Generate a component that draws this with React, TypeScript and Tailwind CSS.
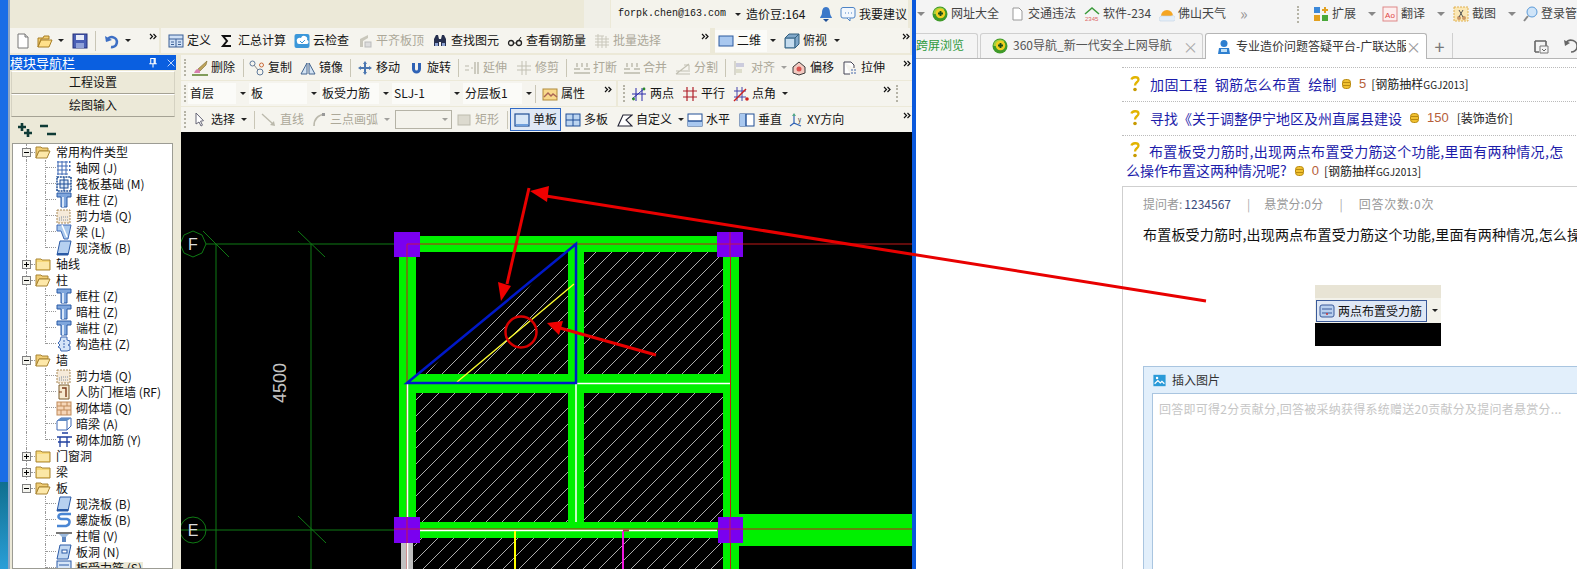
import React from "react";

type N = React.ReactNode;

const Ic = ({ children, cls = "w-4 h-4" }: { children: N; cls?: string }) => (
  <svg viewBox="0 0 16 16" className={`${cls} shrink-0`}>{children}</svg>
);

const Arrow = ({ cls = "" }: { cls?: string }) => (
  <span className={`block w-0 h-0 shrink-0 border-x-[3px] border-x-transparent border-t-[3px] border-t-[#222] ${cls}`} />
);
const GArrow = ({ cls = "" }: { cls?: string }) => (
  <span className={`block w-0 h-0 shrink-0 border-x-[4px] border-x-transparent border-t-[4px] border-t-[#888] ${cls}`} />
);

const Chev = ({ cls = "" }: { cls?: string }) => (
  <svg viewBox="0 0 8 7" className={`w-2 h-[7px] shrink-0 ${cls}`}>
    <path d="M1 1l2.5 2.5L1 6M4.5 1L7 3.5 4.5 6" fill="none" stroke="#111" strokeWidth="1.2" />
  </svg>
);

const Grip = ({ cls = "" }: { cls?: string }) => (
  <span className={`block w-[2px] h-[17px] shrink-0 border-l-2 border-dotted border-[#b5b3a6] ${cls}`} />
);

const Sep = ({ w }: { w: string }) => (
  <span className={`block h-[18px] shrink-0 border-l border-[#c9c6b6] ${w}`} />
);

function Tool({ w, icon, text, off, arrow, tone }: { w: string; icon?: N; text: string; off?: boolean; arrow?: boolean; tone?: string }) {
  return (
    <div className={`flex items-center gap-[3px] shrink-0 ${w}`}>
      {icon}
      <span className={`whitespace-nowrap mb-[2px] ${off ? "text-[#aca899]" : tone ?? "text-[#151515]"}`}>{text}</span>
      {arrow && <Arrow cls={off ? "ml-[3px] opacity-40" : "ml-[3px]"} />}
    </div>
  );
}

function Field({ w, text }: { w: string; text: string }) {
  return (
    <div className={`flex items-center h-[21px] shrink-0 ${w}`}>
      <div className="flex-1 h-full bg-[#fbfbf8] pl-[2px] pb-[2px] flex items-center whitespace-nowrap overflow-hidden text-[#151515]">{text}</div>
      <div className="w-[13px] flex justify-center"><Arrow /></div>
    </div>
  );
}

/* ---------- toolbar icons ---------- */
const I = {
  doc: <Ic><path d="M3 1h7l3 3v11H3z" fill="#fff" stroke="#777" /><path d="M10 1v3h3" fill="#ddd" stroke="#777" /></Ic>,
  folder: <Ic><path d="M1 5h5l1-2h5v3H4L1 14z" fill="#f3cf73" stroke="#a87f25" /><path d="M1 14l3-7h11l-3 7z" fill="#ffe08a" stroke="#a87f25" /></Ic>,
  save: <Ic><rect x="1" y="1" width="14" height="14" fill="#4a5fb5" stroke="#24307a" /><rect x="4" y="2" width="8" height="5" fill="#e8ecf8" /><rect x="4" y="10" width="8" height="5" fill="#8fa0d8" /></Ic>,
  undo: <Ic><path d="M3 8a5 5 0 1 1 4 6" fill="none" stroke="#3d6fc4" strokeWidth="2.6" /><path d="M1 3l1 6 6-2z" fill="#3d6fc4" /></Ic>,
  def: <Ic><rect x="1" y="2" width="14" height="12" fill="#cfe0f5" stroke="#3a5f95" /><path d="M1 6h14M8 6v8M3 9h3M10 9h3M3 11.5h3M10 11.5h3" stroke="#3a5f95" /></Ic>,
  sigma: <Ic><path d="M12 3H4l4 5-4 5h8" fill="none" stroke="#111" strokeWidth="2" /></Ic>,
  cloud: <Ic><rect x="0.5" y="1" width="15" height="14" rx="2" fill="#3b97d9" /><path d="M3 9a3 3 0 0 1 4-4 3 3 0 0 1 6 2 2 2 0 0 1-1 4H5a2 2 0 0 1-2-2z" fill="#fff" /><path d="M6 8l2 2 3-3" fill="none" stroke="#3b97d9" /></Ic>,
  alignTop: <Ic><path d="M3 14V6l8-4v3l-5 3v6z" fill="#c9c7bb" /><rect x="8" y="9" width="6" height="5" fill="#ddd" stroke="#bbb" /></Ic>,
  binoc: <Ic><path d="M2 13V6l2-4h2l1 4v7zM14 13V6l-2-4h-2L9 6v7z" fill="#27304f" /><rect x="7" y="6" width="2" height="3" fill="#27304f" /><rect x="3" y="10" width="3" height="3" fill="#8aa0d0" /><rect x="10" y="10" width="3" height="3" fill="#8aa0d0" /></Ic>,
  glasses: <Ic><circle cx="4" cy="10" r="2.5" fill="none" stroke="#222" strokeWidth="1.3" /><circle cx="12" cy="10" r="2.5" fill="none" stroke="#222" strokeWidth="1.3" /><path d="M6.5 10h3M12 7l2-3" stroke="#222" /></Ic>,
  batch: <Ic><path d="M1 3h9M1 6h14M1 9h14M1 12h14M4 1v14M8 3v12M12 3v12" stroke="#c9c7bb" /></Ic>,
  rect2d: <Ic><rect x="1" y="3" width="14" height="10" fill="#a9c8ef" stroke="#2d5a9e" /></Ic>,
  cube: <Ic><path d="M1 5l4-4h10v10l-4 4H1z" fill="#7fa7c9" stroke="#34607f" /><path d="M1 5h10v10M11 5l4-4" fill="none" stroke="#34607f" /><rect x="2" y="6" width="8" height="8" fill="#c5dcee" /></Ic>,
  brush: <Ic><path d="M15 1L6 9l2 2 6-6z" fill="#bda35a" stroke="#7c6a2c" strokeWidth=".6" /><path d="M6 9c-2 0-3 2-4 4h6l0-2z" fill="#d880b0" /><path d="M0 15h16" stroke="#5a7f2a" strokeWidth="1.5" /></Ic>,
  copy: <Ic><circle cx="3.5" cy="3.5" r="2.5" fill="none" stroke="#5f7a9c" /><circle cx="12.5" cy="5" r="2" fill="none" stroke="#c96a3a" /><circle cx="11" cy="12" r="3" fill="none" stroke="#5f7a9c" /><path d="M5 5l4 5" stroke="#888" /></Ic>,
  mirror: <Ic><path d="M7 3v11H1zM9 3v11h6z" fill="#d3e3f3" stroke="#44658f" /></Ic>,
  move: <Ic><path d="M8 1l2 3H9v3h3V6l3 2-3 2V9H9v3h1l-2 3-2-3h1V9H4v1L1 8l3-2v1h3V4H6z" fill="#4a76b0" /></Ic>,
  rotate: <Ic><path d="M4 3v6a4.5 4.5 0 0 0 9 0V3h-3v6a1.5 1.5 0 0 1-3 0V3z" fill="#2f62b5" /></Ic>,
  extend: <Ic><path d="M1 6h4M1 10h4M7 8h2" stroke="#bbb9ac" /><path d="M11 2v12M14 2v12" stroke="#bbb9ac" strokeWidth="1.4" /></Ic>,
  trim: <Ic><path d="M1 6h14M1 10h14M6 1v14M10 1v14" stroke="#c2c0b3" /></Ic>,
  brk: <Ic><path d="M0 9h6M10 9h6M0 13h16M3 3v4M8 3v4M13 3v4" stroke="#bbb9ac" strokeWidth="1.4" /></Ic>,
  split: <Ic><path d="M1 14h14M1 11h14M1 14l13-10" stroke="#c2c0b3" strokeWidth="1.2" /><path d="M9 5h5v5" fill="none" stroke="#c2c0b3" /></Ic>,
  align: <Ic><path d="M3 1v14" stroke="#bbb9ac" /><rect x="4" y="3" width="8" height="4" fill="#ccd" /><rect x="4" y="9" width="6" height="4" fill="#ddc" /></Ic>,
  offset: <Ic><path d="M8 2l6 5v6l-6 2-6-2V7z" fill="#f2c9c0" stroke="#3a3a3a" /><circle cx="8" cy="9" r="2.5" fill="#d9534f" /></Ic>,
  stretch: <Ic><path d="M2 2h7l3 3v3M2 2v12h6" fill="#fff" stroke="#445" /><path d="M9 10h5M9 13h5" stroke="#46a" strokeDasharray="2 1" /></Ic>,
  prop: <Ic><rect x="1" y="3" width="14" height="11" fill="#f8d98c" stroke="#b0893a" /><path d="M2 11l4-4 3 3 2-2 4 3" fill="none" stroke="#a65" strokeWidth="1.4" /></Ic>,
  two: <Ic><path d="M1 13L14 2M1 8h14M5 2v13M11 2v13" stroke="#2a2aaa" /><circle cx="2.5" cy="13" r="1.4" fill="#2a8a2a" /><circle cx="13" cy="3" r="1.4" fill="#2a8a2a" /></Ic>,
  para: <Ic><path d="M1 5h14M1 11h14M5 1v14M11 1v14" stroke="#b0202a" strokeWidth="1.2" /></Ic>,
  pang: <Ic><path d="M1 5h12M1 11h12M4 1v14M9 1v14" stroke="#44a" /><path d="M1 15L13 3" stroke="#c22" strokeWidth="1.4" /><circle cx="14" cy="13" r="1.8" fill="#c22" /></Ic>,
  cursor: <Ic><path d="M4 1v11l3-2 2 4 1.500-.8-2-4 3-.5z" fill="#fff" stroke="#667" /></Ic>,
  line: <Ic><path d="M1 2l11 10" stroke="#bbb9ac" strokeWidth="1.3" /><path d="M14 14l-5-1 4-4z" fill="#bbb9ac" /></Ic>,
  arc: <Ic><path d="M3 14C3 7 7 3 14 2" fill="none" stroke="#bbb9ac" strokeWidth="1.6" /><rect x="11" y="1" width="3" height="3" fill="#999" /></Ic>,
  rectOff: <Ic><rect x="2" y="3" width="12" height="10" fill="#dcdacf" stroke="#bdbbae" /></Ic>,
  single: <Ic><rect x="1" y="2" width="14" height="12" fill="#d7e6f7" stroke="#214f96" strokeWidth="1.2" /><path d="M2 13h12" stroke="#6f9fdc" strokeWidth="2" /></Ic>,
  multi: <Ic><rect x="1" y="2" width="14" height="12" fill="#bcd5f0" stroke="#214f96" /><path d="M8 2v12M1 8h14" stroke="#214f96" /></Ic>,
  custom: <Ic><path d="M1 14l5-11h9l-6 5 6 6z" fill="#fff" stroke="#223" strokeWidth="1.1" /></Ic>,
  horiz: <Ic><rect x="1" y="2" width="14" height="12" fill="#fff" stroke="#214f96" /><path d="M1 9h14v5H1z" fill="#a9c8ef" /><path d="M1 9h14" stroke="#214f96" strokeWidth="1.4" /></Ic>,
  vert: <Ic><rect x="1" y="2" width="14" height="12" fill="#fff" stroke="#214f96" /><path d="M1 2h6v12H1z" fill="#a9c8ef" /><path d="M7 2v12" stroke="#214f96" strokeWidth="1.4" /></Ic>,
  xy: <Ic><path d="M6 2v9l7 3M6 11l-4 3" fill="none" stroke="#2f62b5" strokeWidth="1.2" /><path d="M4 4l2-3 2 3" fill="#5a8" /><text x="10" y="10" fontSize="6" fill="#222">y</text></Ic>,
  bell: <Ic><path d="M8 1c3 0 4 3 4 6 0 2 2 4 2 5H2c0-1 2-3 2-5 0-3 1-6 4-6z" fill="#3b78c9" /><path d="M5 13h6l-3 3z" fill="#1f4f96" /></Ic>,
  chat: <Ic><rect x="1" y="1.500" width="14" height="10.500" rx="2" fill="#f2f7fd" stroke="#4d83c5" /><path d="M7 12l3 3v-3" fill="#f2f7fd" stroke="#4d83c5" /><path d="M5 7h1M8 7h1M11 7h1" stroke="#4d83c5" /></Ic>,
  pin: <Ic cls="w-3 h-3"><path d="M5 2h6v7H5zM3 9h10M8 9v5M9.500 2v7" fill="none" stroke="#fff" strokeWidth="1.400" /></Ic>,
  close: <Ic cls="w-3 h-3"><path d="M3.500 3.500l9 9M12.500 3.500l-9 9" stroke="#cfe0ff" strokeWidth="1.200" /></Ic>,
};

/* ---------- tree icons ---------- */
const Col = <Ic><path d="M1 1h14v4h-4v10H5V5H1z" fill="#7fa6dc" stroke="#2a5aa6" /><path d="M7 5v10" stroke="#d8e6f8" strokeWidth="2" /></Ic>;
const Wall = <Ic><rect x="1" y="2" width="13" height="13" fill="#f6ead9" stroke="#a98a58" strokeDasharray="2 1" /><path d="M3 12h9M5 9h7M3 10h4" stroke="#a9b0b8" strokeDasharray="1 1" strokeWidth="1.500" /></Ic>;
const Slab = <Ic><path d="M4 1h11l-3 14H1z" fill="#b6d0f0" stroke="#2a5aa6" /><path d="M1 14h11" stroke="#2a5aa6" strokeWidth="2" /></Ic>;
const T: Record<string, N> = {
  grid: <Ic><path d="M1 2h11M1 6h11M1 10h11M1 14h11M2 1v14M6 1v14M10 1v14" stroke="#3f69b4" /><path d="M13 2h2M13 6h2M13 10h2" stroke="#3f69b4" strokeWidth="2" strokeDasharray="1.500 1" /></Ic>,
  raft: <Ic><rect x="1" y="1" width="14" height="14" fill="none" stroke="#1f4f96" strokeWidth="1.500" strokeDasharray="2 .8" /><rect x="4" y="4" width="8" height="8" fill="#dce8f6" stroke="#1f4f96" /><path d="M1 8h14M8 1v14" stroke="#1f4f96" /></Ic>,
  col: Col,
  wall: Wall,
  beam: <Ic><path d="M1 1h14l-3 14H8L5 7H1z" fill="#a9c8ec" stroke="#3f69b4" /><path d="M6 1l5 12" stroke="#fff" strokeWidth="1.500" /></Ic>,
  slab: Slab,
  puzzle: <Ic><path d="M5 1h6v3l3 1v3l-2 1 2 1v4l-3 1H5l-1-3-2-1 2-2-2-2 2-2z" fill="#d6e5f7" stroke="#3f69b4" /><path d="M8 4v8" stroke="#3f69b4" strokeDasharray="2 1" /></Ic>,
  door: <Ic><path d="M3 1h10v14H3z" fill="#f7ead0" stroke="#7a5a2a" /><path d="M6 4h4v9" fill="none" stroke="#7a3a1a" strokeWidth="1.400" /><path d="M3 8h3" stroke="#7a3a1a" /></Ic>,
  brick: <Ic><rect x="1" y="2" width="14" height="13" fill="#f6d6b8" stroke="#c08a5a" /><path d="M1 6h14M1 10h14M5 2v4M11 2v4M8 6v4M5 10v5M11 10v5" stroke="#c08a5a" /></Ic>,
  dark: <Ic><path d="M1 5l4-3h10v8l-4 4H1z" fill="#fff" stroke="#3f69b4" /><path d="M5 2h10l-4 3H1z" fill="#5e8ac4" /><path d="M11 5v9" stroke="#3f69b4" /></Ic>,
  rebar: <Ic><path d="M1 5h15M4 5v10M11 5v10M2 10h12M6 1h6" stroke="#1f3f9e" strokeWidth="1.300" /></Ic>,
  spiral: <Ic><path d="M15 2H6C2 2 1 6 5 7h6c4 1 3 6-1 7H1" fill="none" stroke="#4a86d4" strokeWidth="2.500" /></Ic>,
  cap: <Ic><path d="M0 4h16v2H0z" fill="#777" /><path d="M3 6h10l-3 3H6z" fill="#9ab8dc" /><rect x="6" y="9" width="4" height="5" fill="#5d86c0" /></Ic>,
  hole: <Ic><path d="M4 1h11l-3 14H1z" fill="#c2d8f2" stroke="#2a5aa6" /><rect x="6" y="6" width="5" height="3" fill="#fff" stroke="#2a5aa6" /></Ic>,
  rs: <Ic><rect x="1" y="1" width="14" height="14" fill="#d6e5f7" stroke="#2a5aa6" /><path d="M3 5h10M3 9h10" stroke="#2a5aa6" /></Ic>,
};

const FolderOpen = <Ic><path d="M1 3h5l1 1h6v3H4l-3 7z" fill="#f0cd76" stroke="#a88433" /><path d="M1 14l3-7h11l-3 7z" fill="#fde8a9" stroke="#a88433" /></Ic>;
const FolderShut = <Ic><path d="M1 4V3h5l1 1h8v10H1z" fill="#f7d878" stroke="#a88433" /><path d="M2 6h12v7H2z" fill="#fbe7a6" /></Ic>;

const Exp = ({ open }: { open: boolean }) => (
  <span className="relative block w-[9px] h-[9px] shrink-0 border border-[#808080] bg-[#f4f4ee]">
    <span className="absolute left-[1px] right-[1px] top-[3px] h-px bg-black" />
    {!open && <span className="absolute top-[1px] bottom-[1px] left-[3px] w-px bg-black" />}
  </span>
);

function RootRow({ label, open, last }: { label: string; open: boolean; last?: boolean }) {
  return (
    <div className="relative flex items-center h-4 shrink-0">
      {!last && <span className="absolute left-[13px] top-0 h-full border-l border-dotted border-[#999]" />}
      <span className="w-[9px] shrink-0" />
      <span className="relative"><Exp open={open} /></span>
      <span className="w-[4px] border-t border-dotted border-[#999]" />
      {open ? FolderOpen : FolderShut}
      <span className="ml-[5px] whitespace-nowrap text-[#111]">{label}</span>
    </div>
  );
}

function ChildRow({ icon, label, end, noTrunk, sel }: { icon: string; label: string; end?: boolean; noTrunk?: boolean; sel?: boolean }) {
  return (
    <div className="flex items-center h-4 shrink-0">
      <span className={`w-[19px] ml-[13px] h-full shrink-0 ${noTrunk ? "" : "border-l border-dotted border-[#999]"}`} />
      <span className={`w-[10px] shrink-0 self-start border-l border-dotted border-[#999] ${end ? "h-2" : "h-4"}`}>
        <span className="block w-[10px] h-2 border-b border-dotted border-[#999]" />
      </span>
      <span className="ml-[1px]">{T[icon]}</span>
      <span className={`ml-[3px] px-[1px] whitespace-nowrap text-[#111] ${sel ? "bg-[#ece9d8]" : ""}`}>{label}</span>
    </div>
  );
}

const tree: { r?: string; open?: boolean; c?: string; i?: string; end?: boolean; no?: boolean; last?: boolean; sel?: boolean }[] = [
  { r: "常用构件类型", open: true },
  { c: "轴网 (J)", i: "grid" }, { c: "筏板基础 (M)", i: "raft" }, { c: "框柱 (Z)", i: "col" }, { c: "剪力墙 (Q)", i: "wall" }, { c: "梁 (L)", i: "beam" }, { c: "现浇板 (B)", i: "slab", end: true },
  { r: "轴线", open: false },
  { r: "柱", open: true },
  { c: "框柱 (Z)", i: "col" }, { c: "暗柱 (Z)", i: "col" }, { c: "端柱 (Z)", i: "col" }, { c: "构造柱 (Z)", i: "puzzle", end: true },
  { r: "墙", open: true },
  { c: "剪力墙 (Q)", i: "wall" }, { c: "人防门框墙 (RF)", i: "door" }, { c: "砌体墙 (Q)", i: "brick" }, { c: "暗梁 (A)", i: "dark" }, { c: "砌体加筋 (Y)", i: "rebar", end: true },
  { r: "门窗洞", open: false },
  { r: "梁", open: false },
  { r: "板", open: true, last: true },
  { c: "现浇板 (B)", i: "slab", no: true }, { c: "螺旋板 (B)", i: "spiral", no: true }, { c: "柱帽 (V)", i: "cap", no: true }, { c: "板洞 (N)", i: "hole", no: true }, { c: "板受力筋 (S)", i: "rs", no: true, sel: true },
];

function Cad() {
  return (
    <svg viewBox="181 132 731 437" className="block w-[731px] h-[437px]">
      <defs>
        <pattern id="hatch" width="16" height="16" patternUnits="userSpaceOnUse">
          <path d="M-2 18L18 -2" stroke="#d8d8d8" strokeWidth="0.8" />
          <path d="M-2 2L2 -2M14 18l4 -4" stroke="#d8d8d8" strokeWidth="0.8" />
        </pattern>
      </defs>
      <rect x="181" y="132" width="731" height="437" fill="#000" />
      {/* hatch */}
      <polygon points="424,374 568,255 568,374" fill="url(#hatch)" />
      <rect x="584" y="252" width="139" height="122" fill="url(#hatch)" />
      <rect x="416" y="393" width="152" height="129" fill="url(#hatch)" />
      <rect x="584" y="393" width="139" height="129" fill="url(#hatch)" />
      <rect x="414" y="538" width="309" height="31" fill="url(#hatch)" />
      {/* axis */}
      <g stroke="#0f7a14" strokeWidth="1" fill="none">
        <path d="M206 244H394M181 530H394M216 244V569M311 244V569" />
        <path d="M203 231L229 257M298 231L325 257M298 516L326 543" />
        <polygon points="193,231 202,235 206,244 202,253 193,257 184,253 180,244 184,235" />
        <circle cx="193" cy="530" r="13" />
      </g>
      <text x="193" y="250" textAnchor="middle" fontSize="16" fill="#dcdcdc" fontFamily="'Liberation Sans',sans-serif">F</text>
      <text x="193" y="536" textAnchor="middle" fontSize="16" fill="#dcdcdc" fontFamily="'Liberation Sans',sans-serif">E</text>
      <text x="0" y="0" transform="translate(286 383) rotate(-90)" textAnchor="middle" fontSize="18" fill="#c4c4c4" fontFamily="'Liberation Sans',sans-serif">4500</text>
      {/* beams */}
      <g fill="#00f000">
        <rect x="407" y="236" width="332" height="16" />
        <rect x="399" y="244" width="17" height="290" />
        <rect x="723" y="244" width="16" height="325" />
        <rect x="568" y="244" width="16" height="294" />
        <rect x="399" y="374" width="340" height="19" />
        <rect x="407" y="522" width="322" height="16" />
        <rect x="731" y="514" width="181" height="32" />
      </g>
      <rect x="401" y="540" width="12" height="29" fill="#c0c0c0" />
      {/* center lines */}
      <path d="M407 244H912M407 529H912" stroke="#c01818" strokeWidth="1" />
      <path d="M407 244V569M730.500 244V569" stroke="#c01818" strokeWidth="1" />
      <path d="M407.500 384V569M576 384V522M576 383.500H730M408 530.500H717" stroke="#fff" strokeWidth="1.500" />
      <path d="M515 531V569" stroke="#ffff00" strokeWidth="2" />
      <path d="M623 531V569" stroke="#f018e0" strokeWidth="2" />
      <path d="M623 530.500h6" stroke="#a04040" strokeWidth="2" />
      <path d="M457 382L574 284" stroke="#ffff30" strokeWidth="1.300" />
      <path d="M407 383L576 244V383Z" fill="none" stroke="#0018c8" strokeWidth="2.500" />
      {/* columns */}
      <g fill="#7a00f0">
        <rect x="394" y="232" width="26" height="25" />
        <rect x="717" y="232" width="26" height="25" />
        <rect x="394" y="517" width="26" height="26" />
        <rect x="718" y="517" width="25" height="26" />
      </g>
      <path d="M407 244H420M717 244H743M394 529H420M717 529H743M407 244V257M730 232V257M407 517V543M730 517V543" stroke="#c01848" strokeWidth="1" />
    </svg>
  );
}

function LeftWindow() {
  return (
    <div className="w-[902px] h-full shrink-0 flex flex-col bg-[#ece9d8]">
      {/* top strip */}
      <div className="h-[28px] flex items-center shrink-0">
        <span className="w-[574px] shrink-0" />
        <span className="w-[26px] h-full bg-[#f0efe7] shrink-0" />
        <div className="ml-px w-[297px] h-full bg-[#f4f3ec] flex items-center pl-[7px] shrink-0 text-[#151515]">
          <span className="w-[108px] font-['Liberation_Mono',monospace] text-[10px] whitespace-nowrap">forpk.chen@163.com</span>
          <Arrow cls="ml-[9px]" />
          <span className="ml-[5px] w-[63px] whitespace-nowrap">造价豆:164</span>
          <span className="ml-[9px]">{I.bell}</span>
          <span className="ml-[6px]">{I.chat}</span>
          <span className="ml-[3px] whitespace-nowrap">我要建议</span>
        </div>
      </div>
      {/* toolbar row 1 */}
      <div className="h-[25px] flex shrink-0 mb-[2px]">
        <div className="w-[149px] flex items-center bg-[#f5f4ee] pl-[5px] shrink-0">
          {I.doc}
          <span className="ml-[6px]">{I.folder}</span>
          <Arrow cls="ml-[5px]" />
          <span className="ml-[8px]">{I.save}</span>
          <span className="ml-[7px] h-[20px] border-l border-[#c9c6b6]" />
          <span className="ml-[8px]">{I.undo}</span>
          <Arrow cls="ml-[5px]" />
          <Chev cls="ml-[18px] -mt-[8px]" />
        </div>
        <div className="ml-[2px] w-[549px] flex items-center bg-[#f5f4ee] pl-[7px] shrink-0">
          <Tool w="w-[51px]" icon={I.def} text="定义" />
          <Tool w="w-[75px]" icon={I.sigma} text="汇总计算" />
          <Tool w="w-[63px]" icon={I.cloud} text="云检查" />
          <Tool w="w-[75px]" icon={I.alignTop} text="平齐板顶" off />
          <Tool w="w-[75px]" icon={I.binoc} text="查找图元" />
          <Tool w="w-[87px]" icon={I.glasses} text="查看钢筋量" />
          <Tool w="w-[105px]" icon={I.batch} text="批量选择" off />
          <Chev cls="ml-[2px] -mt-[8px]" />
        </div>
        <div className="ml-[5px] w-[195px] flex items-center bg-[#f5f4ee] shrink-0">
          <div className="w-[52px] h-[22px] bg-[#fbfbf8] pl-[3px] pr-[2px] flex items-center gap-[3px] shrink-0">
            {I.rect2d}<span className="text-[#151515] whitespace-nowrap mb-[2px]">二维</span>
          </div>
          <Arrow cls="ml-[3px]" />
          <span className="ml-[8px] flex items-center gap-[3px] shrink-0">{I.cube}<span className="text-[#151515] whitespace-nowrap mb-[2px]">俯视</span></span>
          <Arrow cls="ml-[7px]" />
          <Chev cls="ml-[62px] -mt-[8px]" />
        </div>
      </div>
      <div className="flex-1 flex min-h-0">
        {/* module panel */}
        <div className="w-[166px] h-full shrink-0 flex flex-col">
          <div className="h-[15px] bg-[#0a5fe0] flex items-center text-white text-[13px] shrink-0">
            <span className="whitespace-nowrap">模块导航栏</span>
            <span className="ml-[72px]">{I.pin}</span>
            <span className="ml-[6px]">{I.close}</span>
          </div>
          <div className="mt-px mx-[1px] h-[23px] pb-[2px] flex items-center justify-center border-t border-white border-b border-b-[#a5a294] border-x border-x-[#d5d2c2] text-[#151515] shrink-0">工程设置</div>
          <div className="mx-[1px] h-[23px] pb-[2px] flex items-center justify-center border-t border-white border-b border-b-[#a5a294] border-x border-x-[#d5d2c2] text-[#151515] shrink-0">绘图输入</div>
          <div className="h-[26px] flex items-center pl-[7px] gap-[7px] shrink-0">
            <svg viewBox="0 0 16 14" className="w-4 h-[14px]"><path d="M5 0v8M1 4h8M11 6v8M7 10h8" stroke="#0f3b36" strokeWidth="2.600" /></svg>
            <svg viewBox="0 0 16 14" className="w-4 h-[14px]"><path d="M0 3h8M7 11h9" stroke="#0f3b36" strokeWidth="2.600" /></svg>
          </div>
          <div className="mx-[2px] w-[161px] flex-1 min-h-0 bg-white border border-[#9c9c94] overflow-hidden flex flex-col">
            {tree.map((n, i) =>
              n.r ? (
                <RootRow key={i} label={n.r} open={!!n.open} last={n.last} />
              ) : (
                <ChildRow key={i} icon={n.i!} label={n.c!} end={n.end} noTrunk={n.no} sel={n.sel} />
              )
            )}
          </div>
        </div>
        <span className="w-[5px] shrink-0" />
        {/* work area */}
        <div className="flex-1 min-w-0 flex flex-col">
          {/* row 2 */}
          <div className="h-[25px] flex items-center bg-[#f5f4ee] shrink-0 pl-[3px] mb-[1px]">
            <Grip cls="mr-[6px]" />
            <Tool w="w-[51px]" icon={I.brush} text="删除" />
            <Sep w="w-[6px]" />
            <Tool w="w-[51px]" icon={I.copy} text="复制" />
            <Tool w="w-[50px]" icon={I.mirror} text="镜像" />
            <Sep w="w-[7px]" />
            <Tool w="w-[51px]" icon={I.move} text="移动" />
            <Tool w="w-[50px]" icon={I.rotate} text="旋转" />
            <Sep w="w-[6px]" />
            <Tool w="w-[52px]" icon={I.extend} text="延伸" off />
            <Tool w="w-[50px]" icon={I.trim} text="修剪" off />
            <Sep w="w-[8px]" />
            <Tool w="w-[50px]" icon={I.brk} text="打断" off />
            <Tool w="w-[51px]" icon={I.brk} text="合并" off />
            <Tool w="w-[50px]" icon={I.split} text="分割" off />
            <Sep w="w-[7px]" />
            <Tool w="w-[59px]" icon={I.align} text="对齐" off arrow />
            <Tool w="w-[51px]" icon={I.offset} text="偏移" />
            <Tool w="w-[61px]" icon={I.stretch} text="拉伸" />
            <Chev cls="-mt-[8px]" />
          </div>
          {/* row 3 */}
          <div className="h-[25px] flex items-center bg-[#f5f4ee] shrink-0 pl-[3px] mb-[1px]">
            <Grip cls="mr-[2px]" />
            <Field w="w-[61px]" text="首层" />
            <Field w="w-[71px]" text="板" />
            <Field w="w-[72px]" text="板受力筋" />
            <Field w="w-[71px]" text="SLJ-1" />
            <Field w="w-[72px]" text="分层板1" />
            <Sep w="w-[7px]" />
            <Tool w="w-[62px]" icon={I.prop} text="属性" />
            <Chev cls="-mt-[8px]" />
            <span className="ml-[4px] w-[2px] h-full bg-[#ece9d8] shrink-0" />
            <Grip cls="ml-[5px] mr-[6px]" />
            <Tool w="w-[51px]" icon={I.two} text="两点" />
            <Tool w="w-[51px]" icon={I.para} text="平行" />
            <Tool w="w-[150px]" icon={I.pang} text="点角" arrow />
            <Chev cls="-mt-[8px]" />
            <Grip cls="ml-[5px]" />
          </div>
          {/* row 4 */}
          <div className="h-[25px] flex items-center bg-[#f5f4ee] shrink-0 pl-[3px]">
            <Grip cls="mr-[6px]" />
            <Tool w="w-[62px]" icon={I.cursor} text="选择" arrow />
            <Sep w="w-[7px]" />
            <Tool w="w-[50px]" icon={I.line} text="直线" off />
            <Tool w="w-[84px]" icon={I.arc} text="三点画弧" off arrow />
            <div className="w-[57px] h-[19px] border border-[#b5b3a6] bg-[#f4f3ec] flex items-center justify-end pr-[3px] shrink-0"><Arrow cls="opacity-40" /></div>
            <span className="w-[4px] shrink-0" />
            <Tool w="w-[51px]" icon={I.rectOff} text="矩形" off />
            <Sep w="w-[3px]" />
            <div className="w-[51px] h-[23px] border border-[#316ac5] bg-[#dfe8f5] flex items-center gap-[3px] pl-[3px] text-[#151515] shrink-0">
              {I.single}<span className="mb-[2px]">单板</span>
            </div>
            <span className="w-[4px] shrink-0" />
            <Tool w="w-[52px]" icon={I.multi} text="多板" />
            <Tool w="w-[70px]" icon={I.custom} text="自定义" arrow />
            <Tool w="w-[52px]" icon={I.horiz} text="水平" />
            <Tool w="w-[49px]" icon={I.vert} text="垂直" />
            <Tool w="w-[115px]" icon={I.xy} text="XY方向" />
            <Chev cls="-mt-[8px]" />
          </div>
          <div className="flex-1 min-h-0 overflow-hidden"><Cad /></div>
        </div>
      </div>
    </div>
  );
}

const Q360 = (
  <Ic>
    <circle cx="8" cy="8" r="7.500" fill="#3f9a2a" />
    <path d="M1.500 8a6.500 6.500 0 0 1 11-4.700L8 8z" fill="#a8d040" />
    <circle cx="8.500" cy="7.500" r="4.800" fill="#f0d020" />
    <path d="M6 7.500h5M8.500 5v5" stroke="#1c4f1c" strokeWidth="1.900" />
  </Ic>
);

const QMark = (
  <svg viewBox="0 0 10 17" className="inline-block w-[10px] h-[17px] align-[-1px] shrink-0">
    <path d="M1.500 4.500C2 2 8 1 8.500 4.500 8.800 7 5 7 5 10.500" fill="none" stroke="#e2b400" strokeWidth="2.300" />
    <circle cx="5" cy="14.500" r="1.800" fill="#c79a00" />
  </svg>
);
const Coin = (
  <svg viewBox="0 0 9 10" className="inline-block w-[9px] h-[10px] shrink-0">
    <rect x="0.500" y="0.500" width="8" height="9" rx="3" fill="#f0c030" stroke="#b98a10" />
    <path d="M1 3.500h7M1 6.500h7" stroke="#b98a10" />
  </svg>
);

const Tag = ({ head, code, cls = "" }: { head: string; code?: string; cls?: string }) => (
  <span className={`text-[12px] text-[#222] whitespace-nowrap ${cls}`}>
    [{head}
    {code && <span className="text-[10px]">{code}</span>}]
  </span>
);
const Pts = ({ children }: { children: N }) => (
  <span className="text-[13px] text-[#b5603a] whitespace-nowrap font-['Liberation_Sans',sans-serif]">{children}</span>
);

function Browser() {
  return (
    <div className="flex-1 min-w-0 h-full flex flex-col bg-white overflow-hidden">
      <div className="h-[33px] bg-[#f4f4f4] flex items-center shrink-0 pb-[5px]">
        <span className="w-[16px] pl-[1px] shrink-0"><GArrow /></span>
        <Tool w="w-[77px]" icon={Q360} text="网址大全" tone="text-[#444]" />
        <Tool w="w-[75px]" icon={<Ic><path d="M4 2h6l3 3v9H4z" fill="#fff" stroke="#999" /></Ic>} text="交通违法" tone="text-[#444]" />
        <Tool w="w-[75px]" icon={<Ic><path d="M1 8l7-6 7 6" fill="none" stroke="#3a9a3a" strokeWidth="1.500" /><text x="1" y="15" fontSize="6" fill="#d66" fontFamily="'Liberation Sans',sans-serif">2345</text></Ic>} text="软件-234" tone="text-[#444]" />
        <Tool w="w-[81px]" icon={<Ic><path d="M2 10a6 6 0 0 1 12 0z" fill="#f5a623" /><path d="M1 15a3 3 0 0 1 3-5h8a2.500 2.500 0 0 1 3 5z" fill="#e4eef8" stroke="#c5d5e5" strokeWidth=".6" /></Ic>} text="佛山天气" tone="text-[#444]" />
        <span className="w-[57px] text-[#999] text-[16px] leading-none shrink-0 mb-[2px]">»</span>
        <Grip cls="mr-[14px]" />
        <div className="w-[69px] shrink-0 flex items-center gap-[3px]">
          <Ic><rect x="1" y="1" width="6" height="6" fill="#3b88d9" /><rect x="1" y="9" width="6" height="6" fill="#e2a020" /><rect x="9" y="9" width="6" height="6" fill="#4aa83a" /><path d="M12 1v6M9 4h6" stroke="#e2a020" strokeWidth="2" /></Ic>
          <span className="text-[#444] mb-[2px]">扩展</span><GArrow cls="ml-[9px]" />
        </div>
        <div className="w-[71px] shrink-0 flex items-center gap-[3px]">
          <Ic><rect x="1" y="1" width="14" height="14" fill="#fdeeee" stroke="#dd8888" /><text x="8" y="11.500" textAnchor="middle" fontSize="8" fill="#d44" fontFamily="'Liberation Sans',sans-serif">Ao</text></Ic>
          <span className="text-[#444] mb-[2px]">翻译</span><GArrow cls="ml-[9px]" />
        </div>
        <div className="w-[69px] shrink-0 flex items-center gap-[3px]">
          <Ic><rect x="1" y="1" width="14" height="14" fill="#fbe7b5" stroke="#e0b050" strokeDasharray="2 1" /><circle cx="6" cy="12" r="2" fill="#c96" /><circle cx="11" cy="12" r="2" fill="#c96" /><path d="M6 4l4 7M10 4l-4 7" stroke="#555" /></Ic>
          <span className="text-[#444] mb-[2px]">截图</span><GArrow cls="ml-[9px]" />
        </div>
        <Tool w="w-[55px]" icon={<Ic><circle cx="10" cy="6" r="5" fill="#cfe4f8" stroke="#5a9ad8" /><path d="M6 10l-4 5" stroke="#888" strokeWidth="2" /></Ic>} text="登录管" tone="text-[#444]" />
      </div>
      {/* tabs */}
      <div className="h-[26px] bg-[#f4f4f4] border-b border-[#b5b5b5] flex items-end shrink-0">
        <div className="w-[62px] h-[25px] pb-[2px] border-t border-r border-[#cfcfcf] rounded-tr-[3px] flex items-center text-[#2d9a3c] shrink-0 whitespace-nowrap">跨屏浏览</div>
        <div className="ml-[2px] w-[223px] h-[25px] border-t border-x border-[#cfcfcf] rounded-t-[3px] flex items-center pl-[11px] shrink-0">
          {Q360}
          <span className="ml-[5px] w-[170px] whitespace-nowrap text-[#555] mb-[2px]">360导航_新一代安全上网导航</span>
          <span className="text-[#aaa] text-[15px] leading-none">×</span>
        </div>
        <div className="ml-[2px] w-[222px] h-[26px] -mb-px bg-white border-t border-x border-[#b5b5b5] rounded-t-[3px] flex items-center pl-[10px] shrink-0">
          <Ic><circle cx="8" cy="4.500" r="3.500" fill="#2e7fd0" /><path d="M2 15l1-6h10l1 6z" fill="#2e7fd0" /><rect x="5" y="10" width="6" height="3" fill="#bfe0f8" /></Ic>
          <span className="ml-[4px] w-[170px] overflow-hidden whitespace-nowrap text-[#333] mb-[2px]">专业造价问题答疑平台-广联达服</span>
          <span className="text-[#999] text-[15px] leading-none">×</span>
        </div>
        <div className="w-[26px] h-[25px] border-r border-[#cfcfcf] flex items-center justify-center text-[#777] text-[18px] shrink-0">+</div>
        <span className="ml-[80px] mb-[3px]">
          <Ic><path d="M2 2h11M2 2v11M2 13h4M13 2v5" fill="none" stroke="#666" strokeWidth="1.600" /><path d="M7 7h8v7H7z" fill="none" stroke="#777" /><path d="M9 10l2 2 2-2" fill="none" stroke="#666" /></Ic>
        </span>
        <span className="ml-[14px] mb-[3px]">
          <Ic><path d="M3 4a6 6 0 0 1 11 4c0 3-3 5-6 5" fill="none" stroke="#666" strokeWidth="1.600" /><path d="M1 1l1 6 5-3z" fill="#666" /></Ic>
        </span>
      </div>
      {/* page */}
      <div className="flex-1 min-h-0 pl-[206px] pt-[8px] overflow-hidden">
        <div className="w-[600px] h-[34px] pb-[2px] border-t border-dotted border-[#bbb] flex items-center pl-[8px] gap-[10px]">
          {QMark}
          <span className="text-[14px] text-[#1c1caa] whitespace-nowrap tracking-[0.4px]">加固工程&nbsp;&nbsp;钢筋怎么布置&nbsp;&nbsp;绘制</span>
          <span className="flex items-center gap-[8px] -ml-[5px]">{Coin}<Pts>5</Pts><Tag head="钢筋抽样" code="GGJ2013" cls="-ml-[3px]" /></span>
        </div>
        <div className="w-[600px] h-[34px] pb-[2px] border-t border-dotted border-[#bbb] flex items-center pl-[8px] gap-[10px]">
          {QMark}
          <span className="text-[14px] text-[#1c1caa] whitespace-nowrap">寻找《关于调整伊宁地区及州直属县建设</span>
          <span className="flex items-center gap-[8px] -ml-[2px]">{Coin}<Pts>150</Pts><Tag head="装饰造价" /></span>
        </div>
        <div className="w-[600px] h-[51px] border-t border-dotted border-[#bbb] pl-[5px] pt-[5px] text-[14px] leading-[19px] text-[#1c1caa]">
          <div className="whitespace-nowrap tracking-[0.35px]">
            <span className="inline-block w-[3px]" />{QMark}<span className="inline-block w-[9px]" />布置板受力筋时,出现两点布置受力筋这个功能,里面有两种情况,怎
          </div>
          <div className="flex items-center gap-[8px] whitespace-nowrap h-[19px]">
            <span className="-ml-[1px]">么操作布置这两种情况呢?</span>
            {Coin}<Pts>0</Pts><Tag head="钢筋抽样" code="GGJ2013" cls="-ml-[3px]" />
          </div>
        </div>
        {/* question box */}
        <div className="w-[470px] h-[400px] border-t border-l border-[#cfcfcf] pl-[20px] pt-[9px]">
          <div className="flex items-center h-4 text-[12px] text-[#999] whitespace-nowrap">
            <span>提问者:</span><span className="ml-[2px] text-[#3a4a7a]">1234567</span>
            <span className="ml-[16px] mr-[14px] text-[#aaa]">|</span>
            <span className="tracking-[0.2px]">悬赏分:0分</span>
            <span className="ml-[16px] mr-[16px] text-[#aaa]">|</span>
            <span className="tracking-[0.8px]">回答次数:0次</span>
          </div>
          <div className="mt-[13px] text-[14px] leading-[18px] text-[#111] whitespace-nowrap tracking-[0.2px] overflow-hidden">
            布置板受力筋时,出现两点布置受力筋这个功能,里面有两种情况,怎么操作布置这两种情况呢?
          </div>
          <div className="mt-[42px] ml-[172px] w-[126px] h-[61px] flex flex-col">
            <div className="h-[13px] bg-[#e8e4d5]" />
            <div className="h-[25px] bg-[#f3f2ea] flex items-center pl-[1px]">
              <div className="w-[111px] h-[22px] border border-[#3a5a9a] bg-[#dfe8f5] flex items-center gap-[3px] pl-[2px] text-[12px] text-[#111] whitespace-nowrap">
                <Ic><rect x="1" y="2" width="14" height="12" rx="2" fill="#b8cfee" stroke="#3a5a9a" /><path d="M3 10h10M3 6h10" stroke="#3a5a9a" /><circle cx="8" cy="11" r="1" fill="#c33" /></Ic>
                两点布置受力筋
              </div>
              <Arrow cls="ml-[5px]" />
            </div>
            <div className="h-[23px] bg-black" />
          </div>
          <div className="mt-[20px] w-[460px] h-[220px] border border-[#a9c5e0] bg-[#e2effb]">
            <div className="h-[26px] flex items-center pl-[8px] gap-[5px] text-[12px] text-[#333]">
              <Ic cls="w-[15px] h-[13px]"><rect x="0.500" y="1" width="15" height="14" fill="#2a9ad8" /><path d="M2 12l4-4 3 3 2-2 3 3" fill="none" stroke="#fff" strokeWidth="1.500" /><circle cx="5" cy="5" r="1.500" fill="#fff" /></Ic>
              插入图片
            </div>
            <div className="ml-[8px] h-full bg-white border-t border-l border-[#a9c5e0] pl-[6px] pt-[7px] text-[12px] leading-4 text-[#c6c6c6] whitespace-nowrap tracking-[0.25px]">
              回答即可得2分贡献分,回答被采纳获得系统赠送20贡献分及提问者悬赏分...
            </div>
          </div>
        </div>
      </div>
    </div>
  );
}

export default function App() {
  return (
    <div className="relative w-[1577px] h-[569px] overflow-hidden flex bg-white text-[12px] leading-none font-['Noto_Sans_CJK_SC','Noto_Sans',sans-serif]">
      {/* window edge */}
      <div className="w-[10px] h-full shrink-0 flex flex-col border-r-2 border-[#8fa6c4]">
        <div className="h-[482px] bg-[#1a6de6]" />
        <div className="flex-1 bg-linear-to-b from-[#0f6f8f] to-[#2a9fd8]" />
      </div>
      <LeftWindow />
      <div className="w-[4px] h-full bg-[#0a58dc] shrink-0" />
      <Browser />
      {/* annotation arrows over both windows */}
      <svg viewBox="0 0 1577 569" className="absolute inset-0 w-[1577px] h-[569px] pointer-events-none">
        <g fill="#f00000" stroke="none">
          <path d="M1206 301L546 196" stroke="#e80000" strokeWidth="3" fill="none" />
          <polygon points="530,191 549,186 547,202" />
          <path d="M529 188L507 284" stroke="#e80000" strokeWidth="3" fill="none" />
          <polygon points="501,301 498,282 511,286" />
          <path d="M656 355L560 328" stroke="#e80000" strokeWidth="3" fill="none" />
          <polygon points="547,323 563,321 559,335" />
        </g>
        <circle cx="521" cy="332" r="15.500" fill="none" stroke="#d80000" strokeWidth="2.500" />
      </svg>
    </div>
  );
}
